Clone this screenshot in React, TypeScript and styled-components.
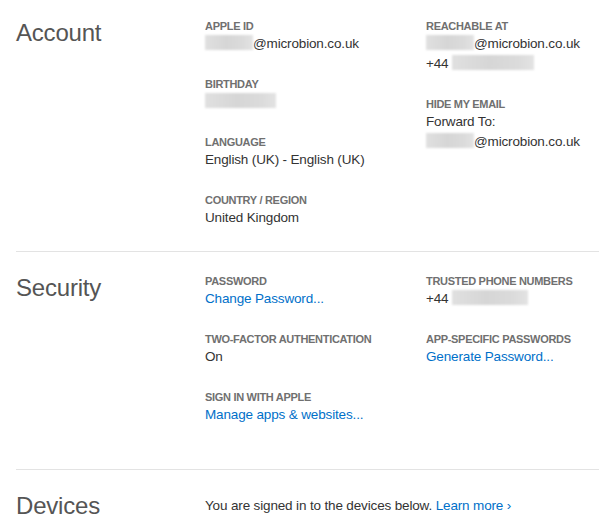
import React from "react";
import styled, { createGlobalStyle } from "styled-components";

const Global = createGlobalStyle`
  html, body { margin: 0; padding: 0; background: #fff; }
  body { font-family: "Liberation Sans", Arial, sans-serif; -webkit-font-smoothing: antialiased; }
`;

const Page = styled.div`
  width: 599px;
  padding-left: 16px;
  box-sizing: border-box;
`;

const Section = styled.section<{ $top: number; $bottom: number; $divider?: boolean }>`
  display: grid;
  grid-template-columns: 189px 221px 1fr;
  padding-top: ${(p) => p.$top}px;
  padding-bottom: ${(p) => p.$bottom}px;
  border-bottom: ${(p) => (p.$divider ? "1px solid #e3e3e3" : "none")};
`;

const Title = styled.h2`
  margin: 1px 0 0;
  font-size: 24px;
  line-height: 28px;
  font-weight: 400;
  color: #555;
  letter-spacing: -0.2px;
`;

const Column = styled.div`
  display: flex;
  flex-direction: column;
  gap: 22px;
`;

const Field = styled.div`
  display: flex;
  flex-direction: column;
`;

const Label = styled.div`
  font-size: 11px;
  line-height: 16px;
  font-weight: 700;
  color: #707070;
  letter-spacing: -0.3px;
  text-transform: uppercase;
`;

const Value = styled.div`
  font-size: 13.5px;
  line-height: 20px;
  letter-spacing: -0.15px;
  color: #333;
  white-space: nowrap;
`;

const Link = styled.a`
  font-size: 13.5px;
  line-height: 20px;
  letter-spacing: -0.15px;
  color: #0070c9;
  text-decoration: none;
  white-space: nowrap;
`;

const Redact = styled.span<{ $w: number }>`
  display: inline-block;
  width: ${(p) => p.$w}px;
  height: 15px;
  vertical-align: -2px;
  background: linear-gradient(90deg, #e0e0e0 0%, #d6d6d6 45%, #dbdbdb 80%, #e3e3e3 100%);
  filter: blur(1.2px);
`;

const Note = styled.div`
  font-size: 13.5px;
  line-height: 20px;
  letter-spacing: -0.15px;
  color: #333;
  white-space: nowrap;
  padding-top: 5px;
`;

export default function App() {
  return (
    <>
      <Global />
      <Page>
        <Section $top={18} $bottom={23} $divider>
          <Title>Account</Title>
          <Column>
            <Field>
              <Label>Apple ID</Label>
              <Value>
                <Redact $w={48} />@microbion.co.uk
              </Value>
            </Field>
            <Field>
              <Label>Birthday</Label>
              <Value>
                <Redact $w={71} />
              </Value>
            </Field>
            <Field>
              <Label>Language</Label>
              <Value>English (UK) - English (UK)</Value>
            </Field>
            <Field>
              <Label>Country / Region</Label>
              <Value>United Kingdom</Value>
            </Field>
          </Column>
          <Column>
            <Field>
              <Label>Reachable At</Label>
              <Value>
                <Redact $w={48} />@microbion.co.uk
              </Value>
              <Value>
                +44 <Redact $w={82} />
              </Value>
            </Field>
            <Field>
              <Label>Hide My Email</Label>
              <Value>Forward To:</Value>
              <Value>
                <Redact $w={48} />@microbion.co.uk
              </Value>
            </Field>
          </Column>
        </Section>
        <Section $top={21} $bottom={44} $divider>
          <Title>Security</Title>
          <Column>
            <Field>
              <Label>Password</Label>
              <Link href="#">Change Password...</Link>
            </Field>
            <Field>
              <Label>Two-Factor Authentication</Label>
              <Value>On</Value>
            </Field>
            <Field>
              <Label>Sign in with Apple</Label>
              <Link href="#">Manage apps &amp; websites...</Link>
            </Field>
          </Column>
          <Column>
            <Field>
              <Label>Trusted Phone Numbers</Label>
              <Value>
                +44 <Redact $w={76} />
              </Value>
            </Field>
            <Field>
              <Label>App-Specific Passwords</Label>
              <Link href="#">Generate Password...</Link>
            </Field>
          </Column>
        </Section>
        <Section $top={21} $bottom={0}>
          <Title>Devices</Title>
          <Note>
            You are signed in to the devices below. <Link href="#">Learn more ›</Link>
          </Note>
        </Section>
      </Page>
    </>
  );
}
